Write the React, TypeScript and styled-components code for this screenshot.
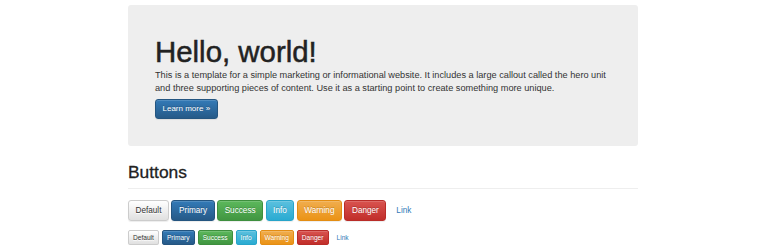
import React from 'react';
import styled, { createGlobalStyle, css } from 'styled-components';

type Variant = 'default' | 'primary' | 'success' | 'info' | 'warning' | 'danger' | 'link';
type Size = 'md' | 'sm';

const palette: Record<Exclude<Variant, 'link'>, { from: string; to: string; border: string; color: string }> = {
  default: { from: '#ffffff', to: '#e0e0e0', border: '#cccccc', color: '#333333' },
  primary: { from: '#337ab7', to: '#265a88', border: '#245580', color: '#ffffff' },
  success: { from: '#5cb85c', to: '#419641', border: '#3e8f3e', color: '#ffffff' },
  info: { from: '#5bc0de', to: '#2aabd2', border: '#28a4c9', color: '#ffffff' },
  warning: { from: '#f0ad4e', to: '#eb9316', border: '#e38d13', color: '#ffffff' },
  danger: { from: '#d9534f', to: '#c12e2a', border: '#b92c28', color: '#ffffff' },
};

const GlobalStyle = createGlobalStyle`
  body {
    margin: 0;
    background: #fff;
    color: #333;
    font-family: "Liberation Sans", Arial, Helvetica, sans-serif;
  }
`;

const Page = styled.div`
  width: 510px;
  padding: 5px 0 0 128px;
`;

const Jumbotron = styled.div`
  background: #eeeeee;
  border-radius: 3px;
  padding: 30px 27px 27px;
`;

const HeroTitle = styled.h1`
  margin: 0;
  font-size: 29.4px;
  line-height: 33px;
  font-weight: 400;
  color: #222;
  -webkit-text-stroke: 0.5px #222;
`;

const Lead = styled.p`
  margin: 0.5px 0 1.5px;
  font-size: 9.2px;
  line-height: 13.3px;
  color: #333;
`;

const HeroButton = styled.a`
  display: inline-block;
  box-sizing: border-box;
  height: 20px;
  padding: 3px 6.5px;
  font-size: 8px;
  line-height: 12px;
  color: #fff;
  text-decoration: none;
  border: 1px solid #245580;
  border-radius: 3px;
  background: linear-gradient(to bottom, #337ab7 0%, #265a88 100%);
  text-shadow: 0 -1px 0 rgba(0, 0, 0, 0.2);
  box-shadow: inset 0 1px 0 rgba(255, 255, 255, 0.15), 0 1px 1px rgba(0, 0, 0, 0.075);
`;

const PageHeader = styled.div`
  margin-top: 17.5px;
  padding-bottom: 6px;
  border-bottom: 1px solid #eeeeee;
`;

const SectionTitle = styled.h2`
  margin: 0;
  font-size: 17.4px;
  line-height: 19px;
  font-weight: 400;
  color: #222;
  -webkit-text-stroke: 0.3px #222;
`;

const ButtonRow = styled.div<{ $size: Size }>`
  display: flex;
  align-items: center;
  gap: ${(p) => (p.$size === 'md' ? '2.5px' : '3px')};
  margin-top: ${(p) => (p.$size === 'md' ? '11px' : '9px')};
`;

const Btn = styled.a<{ $variant: Variant; $size: Size }>`
  display: inline-block;
  box-sizing: border-box;
  border-radius: 3px;
  text-decoration: none;
  white-space: nowrap;
  ${(p) =>
    p.$size === 'md'
      ? css`
          height: 21px;
          padding: 4px 6.5px;
          font-size: 8.2px;
          line-height: 11px;
        `
      : css`
          height: 15px;
          padding: 2px 4px;
          font-size: 6.6px;
          line-height: 9px;
          border-radius: 2px;
        `}
  ${(p) => {
    if (p.$variant === 'link') {
      return css`
        border: 1px solid transparent;
        color: #337ab7;
        background: transparent;
      `;
    }
    const c = palette[p.$variant];
    return css`
      border: 1px solid ${c.border};
      color: ${c.color};
      background: linear-gradient(to bottom, ${c.from} 0%, ${c.to} 100%);
      text-shadow: ${p.$variant === 'default' ? '0 1px 0 #fff' : '0 -1px 0 rgba(0, 0, 0, 0.2)'};
      box-shadow: inset 0 1px 0 rgba(255, 255, 255, 0.15), 0 1px 1px rgba(0, 0, 0, 0.075);
    `;
  }}
`;

const buttons: { variant: Variant; label: string }[] = [
  { variant: 'default', label: 'Default' },
  { variant: 'primary', label: 'Primary' },
  { variant: 'success', label: 'Success' },
  { variant: 'info', label: 'Info' },
  { variant: 'warning', label: 'Warning' },
  { variant: 'danger', label: 'Danger' },
  { variant: 'link', label: 'Link' },
];

function App() {
  return (
    <Page>
      <GlobalStyle />
      <Jumbotron>
        <HeroTitle>Hello, world!</HeroTitle>
        <Lead>
          This is a template for a simple marketing or informational website. It includes a large callout
          called the hero unit and three supporting pieces of content. Use it as a starting point to create
          something more unique.
        </Lead>
        <HeroButton href="#">Learn more »</HeroButton>
      </Jumbotron>

      <PageHeader>
        <SectionTitle>Buttons</SectionTitle>
      </PageHeader>

      {(['md', 'sm'] as Size[]).map((size) => (
        <ButtonRow key={size} $size={size}>
          {buttons.map((b) => (
            <Btn key={b.label} href="#" $variant={b.variant} $size={size}>
              {b.label}
            </Btn>
          ))}
        </ButtonRow>
      ))}
    </Page>
  );
}

export default App;
